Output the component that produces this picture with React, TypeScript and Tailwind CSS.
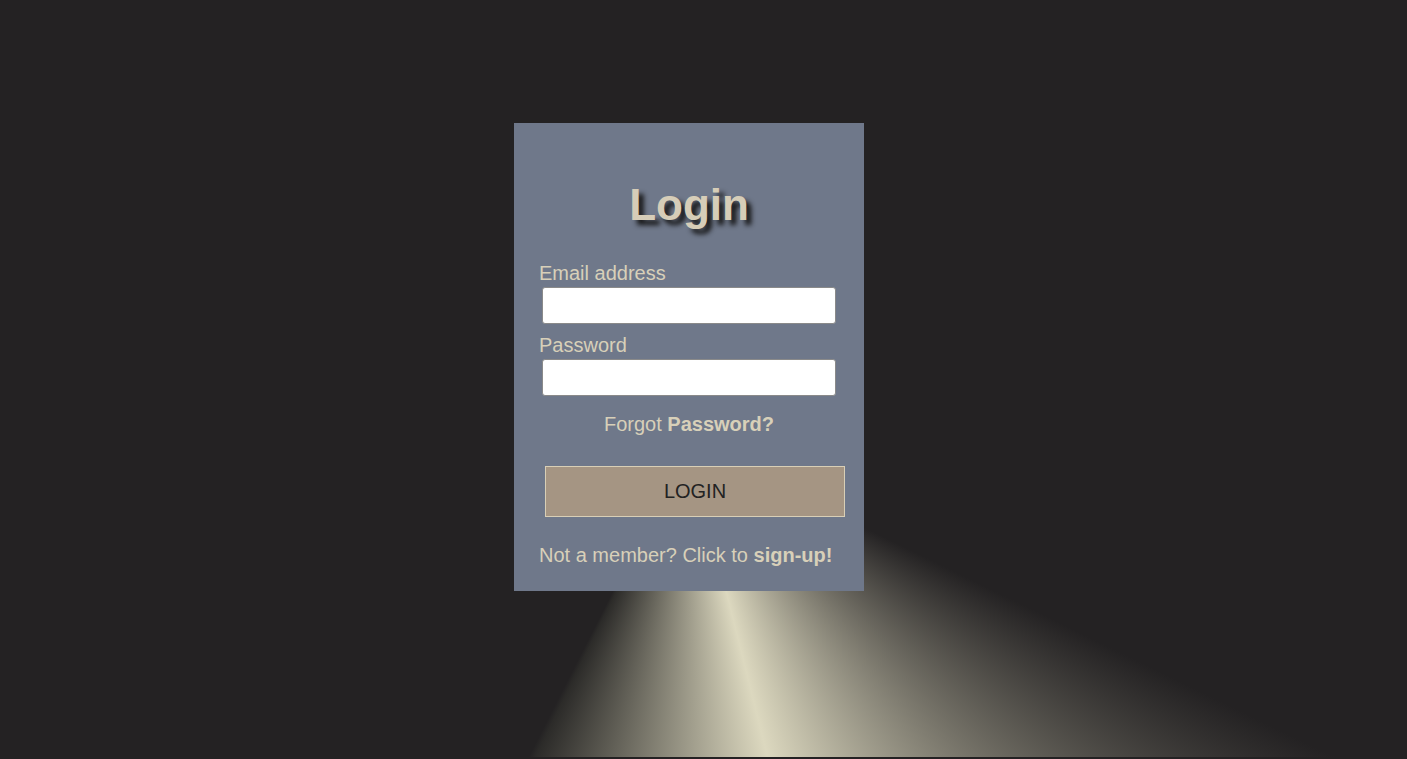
import React from "react";

const App = () => {
  return (
    <div className="min-h-[759px] w-full bg-[#242223] bg-[conic-gradient(from_0deg_at_689px_442px,#242223_0deg,#242223_116deg,#dcd8bf_166deg,#2c2b29_206deg,#242223_207deg,#242223_360deg)] bg-no-repeat bg-[length:100%_757px] font-['Liberation_Sans',Arial,sans-serif] pt-[123px] pl-[514px]">
      {/* Login card */}
      <div className="w-[350px] bg-[#6f788a] pt-[57px] px-[25px] pb-[24px]">
        <h1 className="text-center text-[44px] leading-[1.15] font-bold text-[#d6cdb8] [text-shadow:5px_5px_5px_#141414]">
          Login
        </h1>

        <form onSubmit={(e) => e.preventDefault()}>
          <label className="block mt-[31px] text-[20px] leading-[23px] text-[#d8d0b9]">
            Email address
          </label>
          <input
            type="email"
            className="block mt-[2px] mx-[3px] w-[294px] h-[37px] bg-white border border-[#8a8a8a] rounded-[3px]"
          />

          <label className="block mt-[10px] text-[20px] leading-[23px] text-[#d8d0b9]">
            Password
          </label>
          <input
            type="password"
            className="block mt-[2px] mx-[3px] w-[294px] h-[37px] bg-white border border-[#8a8a8a] rounded-[3px]"
          />

          <p className="mt-[17px] text-center text-[20px] leading-[23px] text-[#d8d0b9]">
            Forgot <span className="font-bold">Password?</span>
          </p>

          <button
            type="submit"
            className="block mt-[30px] ml-[6px] w-[300px] h-[51px] bg-[#a59583] border border-[#d9cfb6] text-[20px] text-[#222222]"
          >
            LOGIN
          </button>

          <p className="mt-[27px] text-[20px] leading-[23px] text-[#d8d0b9] whitespace-nowrap">
            Not a member? Click to <span className="font-bold">sign-up!</span>
          </p>
        </form>
      </div>
    </div>
  );
};

export default App;
